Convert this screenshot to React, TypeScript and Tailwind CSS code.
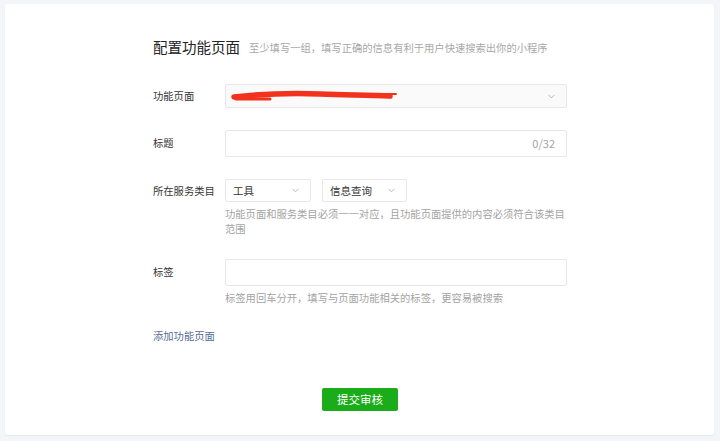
import { ChevronDown } from "lucide-react";

const font = { fontFamily: '"Noto Sans CJK SC", "Noto Sans", sans-serif' };

function Select({ label, className = "" }: { label: string; className?: string }) {
  return (
    <div className={`flex h-[23px] items-center justify-between rounded-[2px] border border-[#e7e7eb] bg-white pl-[7px] pr-[9px] text-[10.5px] text-[#353535] ${className}`}>
      <span>{label}</span>
      <ChevronDown className="h-[11px] w-[11px] text-[#9a9a9a]" strokeWidth={1.5} />
    </div>
  );
}

function Row({ label, children, top = "pt-[5px]" }: { label: string; children: React.ReactNode; top?: string }) {
  return (
    <div className="flex">
      <div className={`w-[72px] shrink-0 text-[10.3px] leading-[15px] text-[#353535] ${top}`}>{label}</div>
      <div className="w-[342px]">{children}</div>
    </div>
  );
}

export default function App() {
  return (
    <div style={font} className="h-[441px] w-[720px] bg-[#f4f5f9] pb-[6px] pl-[5px] pr-[6px] pt-[4px]">
      <div className="h-full rounded-[3px] bg-white pl-[148px] pt-[33px] shadow-[0_1px_2px_rgba(0,0,0,0.06)]">
        <div className="flex h-[20px] items-center gap-[9px]">
          <h1 className="text-[14.5px] leading-[20px] text-[#222]">配置功能页面</h1>
          <span className="pt-[1px] text-[10.3px] leading-[15px] text-[#a8a8a8]">至少填写一组，填写正确的信息有利于用户快速搜索出你的小程序</span>
        </div>

        <div className="mt-[27px] flex flex-col">
          <Row label="功能页面" top="pt-[4px]">
            <div className="relative flex h-[24px] items-center justify-end rounded-[2px] border border-[#e7e7eb] bg-[#fafafa] pr-[9px]">
              <svg className="absolute left-[4px] top-[5px]" width="170" height="12" viewBox="0 0 170 12">
                <path d="M4 7 C 30 4, 60 3, 90 4 C 120 5, 140 5, 160 6" stroke="#f2321d" strokeWidth="5.5" strokeLinecap="round" fill="none" />
                <path d="M150 4 L 166 4" stroke="#f2321d" strokeWidth="2" strokeLinecap="round" fill="none" />
                <path d="M6 9 L 40 9" stroke="#f2321d" strokeWidth="3" strokeLinecap="round" fill="none" />
              </svg>
              <ChevronDown className="h-[11px] w-[11px] text-[#9a9a9a]" strokeWidth={1.5} />
            </div>
          </Row>

          <div className="mt-[22px]">
            <Row label="标题">
              <div className="flex h-[27px] items-center justify-end rounded-[2px] border border-[#e7e7eb] bg-white pr-[11px] text-[11px] text-[#a3a3a3]">
                0/32
              </div>
            </Row>
          </div>

          <div className="mt-[22px]">
            <Row label="所在服务类目" top="pt-[4px]">
              <div className="flex gap-[11px]">
                <Select label="工具" className="w-[86px]" />
                <Select label="信息查询" className="w-[85px]" />
              </div>
              <p className="mt-[4px] w-[346px] text-[10.3px] leading-[15px] text-[#a3a3a3]">
                功能页面和服务类目必须一一对应，且功能页面提供的内容必须符合该类目范围
              </p>
            </Row>
          </div>

          <div className="mt-[23px]">
            <Row label="标签">
              <div className="h-[27px] rounded-[2px] border border-[#e7e7eb] bg-white" />
              <p className="mt-[4px] text-[10.3px] leading-[15px] text-[#a3a3a3]">
                标签用回车分开，填写与页面功能相关的标签，更容易被搜索
              </p>
            </Row>
          </div>

          <div className="mt-[23px] text-[10.3px] leading-[15px] text-[#576b95]">添加功能页面</div>
        </div>

        <div className="mt-[45px] flex pl-[169px]">
          <button className="h-[23px] w-[76px] rounded-[2px] bg-[#1aad19] text-[11.5px] text-white">提交审核</button>
        </div>
      </div>
    </div>
  );
}
